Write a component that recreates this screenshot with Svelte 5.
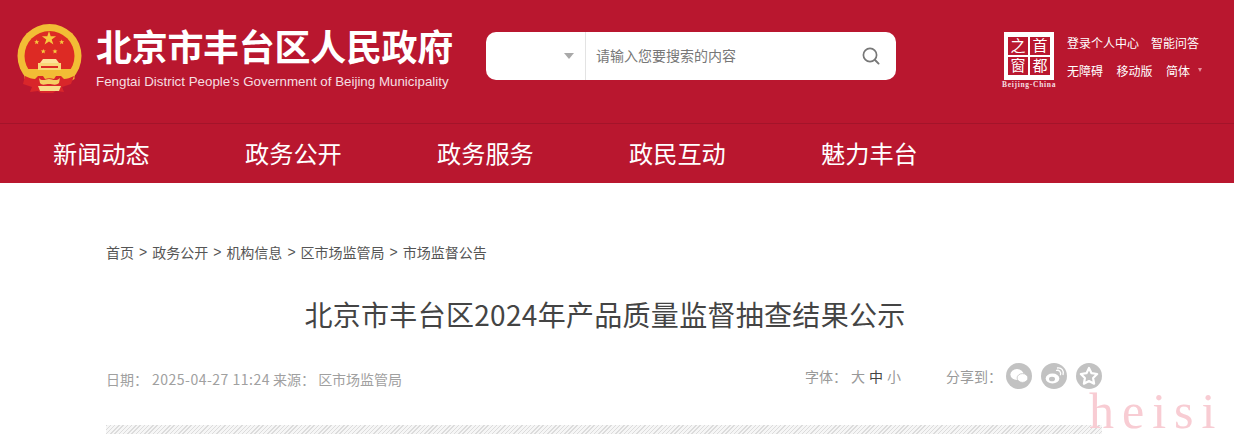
<script>
  const nav = ['新闻动态', '政务公开', '政务服务', '政民互动', '魅力丰台'];
  const crumbs = ['首页', '政务公开', '机构信息', '区市场监管局', '市场监督公告'];
  const smallStars = [[19.7, 19], [44.7, 19], [26.3, 28.3], [38, 28.3]];
</script>

<div class="page">
  <header class="top">
    <div class="brand">
      <svg class="emblem" viewBox="0 0 66 71" width="66" height="71" aria-hidden="true">
        <circle cx="32.5" cy="33" r="32" fill="#f2bd35" />
        <circle cx="32.5" cy="33" r="25" fill="#dd2a24" />
        <path d="M7.5 46h50v10c-8 5-17 7-25 7s-17-2-25-7z" fill="#f2bd35" />
        <path d="M32 8l1.7 5.2h5.4l-4.4 3.2 1.7 5.2-4.4-3.2-4.4 3.2 1.7-5.2-4.4-3.2h5.4z" fill="#f7c83f" />
        {#each smallStars as [x, y]}
          <path d="M{x} {y - 2.4}l.7 1.7h1.8l-1.4 1.1.5 1.8-1.6-1-1.6 1 .5-1.8-1.4-1.1h1.8z" fill="#f7c83f" />
        {/each}
        <path d="M26 36h13l3 4H23z" fill="#fde29a" />
        <path d="M21 40h23v7H21z" fill="#f9d678" />
        <path d="M24 43h17v2H24z" fill="#dd2a24" />
        <path d="M8 53c4 2 7 3 10 3l3-3h5l2 3c3-1 6-1 9 0l2-3h5l3 3c3 0 6-1 10-3l-3 8-9 3 2 5-8-1-3 2h-12l-3-2-8 1 2-5-9-3z" fill="#d9262a" />
        <path d="M22 55c3 4 7 1 10 1s7 3 11-1l-1 5c-3 3-7 1-10 1s-7 2-9-1z" fill="#f6cd62" />
        <path d="M21 63h23l-2 5H23z" fill="#f9dc8b" />
      </svg>
      <div class="names">
        <div class="cn">北京市丰台区人民政府</div>
        <div class="en">Fengtai District People's Government of Beijing Municipality</div>
      </div>
    </div>

    <div class="search">
      <div class="scope"><span class="caret"></span></div>
      <div class="field">请输入您要搜索的内容</div>
      <svg class="magnifier" viewBox="0 0 20 20" width="20" height="20" aria-hidden="true">
        <circle cx="9" cy="9" r="6.6" fill="none" stroke="#777" stroke-width="1.7" />
        <path d="M14 14l3.6 3.6" stroke="#777" stroke-width="1.9" stroke-linecap="round" />
      </svg>
    </div>

    <div class="seal">
      <svg viewBox="0 0 50 48" width="50" height="48" aria-hidden="true">
        <rect x="0" y="0" width="50" height="48" fill="#fff" />
        <rect x="4" y="5" width="20" height="18" fill="#b9172f" />
        <rect x="26" y="5" width="20" height="18" fill="#b9172f" />
        <rect x="4" y="25" width="20" height="18" fill="#b9172f" />
        <rect x="26" y="25" width="20" height="18" fill="#b9172f" />
        <text x="14" y="19" class="seal-glyph">之</text>
        <text x="36" y="19" class="seal-glyph">首</text>
        <text x="14" y="39" class="seal-glyph">窗</text>
        <text x="36" y="39" class="seal-glyph">都</text>
      </svg>
      <div class="seal-en">Beijing-China</div>
    </div>

    <div class="links">
      <div class="link-row first">
        <span>登录个人中心</span>
        <span>智能问答</span>
      </div>
      <div class="link-row">
        <span>无障碍</span>
        <span>移动版</span>
        <span>简体</span>
        <span class="mini-caret"></span>
      </div>
    </div>
  </header>

  <nav class="nav">
    {#each nav as item}
      <div class="nav-item">{item}</div>
    {/each}
  </nav>

  <main class="content">
    <div class="crumbs">
      {#each crumbs as c, i}
        {#if i > 0}<span class="sep">&gt;</span>{/if}
        <span>{c}</span>
      {/each}
    </div>

    <h1 class="title">北京市丰台区2024年产品质量监督抽查结果公示</h1>

    <div class="meta">
      <div class="meta-left">日期：<span class="stamp">2025-04-27 11:24</span> 来源：<span class="source">区市场监管局</span></div>
      <div class="meta-right">
        <div class="sizes">
          <span>字体：</span>
          <span>大</span>
          <span class="active">中</span>
          <span>小</span>
        </div>
        <div class="share">
          <span class="share-label">分享到：</span>
          <span class="round">
            <svg viewBox="0 0 26 26" width="26" height="26" aria-hidden="true">
              <ellipse cx="11" cy="11.5" rx="6.6" ry="5.4" fill="#fff" />
              <ellipse cx="16.5" cy="15" rx="5.4" ry="4.4" fill="#fff" stroke="#c2c2c2" stroke-width="0.8" />
            </svg>
          </span>
          <span class="round">
            <svg viewBox="0 0 26 26" width="26" height="26" aria-hidden="true">
              <ellipse cx="11.5" cy="15.5" rx="6.8" ry="5" fill="#fff" />
              <ellipse cx="11" cy="16" rx="3" ry="2.3" fill="#c2c2c2" />
              <path d="M15 7.5c3-1 5.5 1.5 4.4 4.8M16 5c4.6-1 7.4 3 6 7" fill="none" stroke="#fff" stroke-width="1.3" />
            </svg>
          </span>
          <span class="round">
            <svg viewBox="0 0 26 26" width="26" height="26" aria-hidden="true">
              <path d="M13 5l2.5 5.2 5.7.8-4.1 4 1 5.7-5.1-2.7-5.1 2.7 1-5.7-4.1-4 5.7-.8z" fill="none" stroke="#fff" stroke-width="2.2" stroke-linejoin="round" />
            </svg>
          </span>
        </div>
      </div>
    </div>

    <div class="rule"></div>
  </main>

  <div class="watermark">heisi</div>
</div>

<style>
  :global(body) {
    margin: 0;
    background: #fff;
  }

  .page {
    position: relative;
    width: 1234px;
    height: 442px;
    overflow: hidden;
    font-family: "Noto Sans CJK SC", "Liberation Sans", sans-serif;
  }

  .top {
    display: flex;
    align-items: flex-start;
    height: 123px;
    background: #b9172f;
    box-sizing: border-box;
  }

  .brand {
    display: flex;
    width: 486px;
    padding: 23px 0 0 17px;
    box-sizing: border-box;
    gap: 13px;
  }

  .emblem {
    flex: none;
  }

  .names {
    color: #fff;
    margin-top: -2px;
  }

  .cn {
    font-size: 36px;
    font-weight: 700;
    line-height: 48px;
    letter-spacing: -0.3px;
    white-space: nowrap;
  }

  .en {
    font-family: "Liberation Sans", sans-serif;
    font-size: 13.35px;
    line-height: 18px;
    margin-top: 4px;
    white-space: nowrap;
    color: #f6dfe2;
  }

  .search {
    flex: none;
    display: flex;
    align-items: center;
    width: 410px;
    height: 48px;
    margin-top: 32px;
    background: #fff;
    border-radius: 10px;
  }

  .scope {
    flex: none;
    display: flex;
    justify-content: flex-end;
    align-items: center;
    width: 100px;
    height: 100%;
    box-sizing: border-box;
    padding-right: 11px;
    border-right: 1px solid #e3e3e3;
  }

  .caret {
    width: 0;
    height: 0;
    border-left: 5.5px solid transparent;
    border-right: 5.5px solid transparent;
    border-top: 6px solid #a9a9a9;
  }

  .field {
    flex: 1;
    padding: 0 0 2px 10px;
    color: #777;
    font-size: 14px;
  }

  .magnifier {
    margin-right: 15px;
  }

  .seal {
    flex: none;
    margin: 32px 0 0 108px;
    width: 50px;
  }

  .seal svg {
    display: block;
  }

  .seal-glyph {
    fill: #fff;
    font-family: "Noto Sans CJK SC", sans-serif;
    font-size: 15px;
    text-anchor: middle;
  }

  .seal-en {
    font-family: "Liberation Serif", serif;
    font-size: 7.5px;
    font-weight: 700;
    line-height: 10px;
    letter-spacing: 0.7px;
    color: #f6dfe2;
    white-space: nowrap;
    margin-left: -2px;
  }

  .links {
    flex: none;
    margin: 28px 0 0 13px;
    color: #fff;
    font-size: 12px;
  }

  .link-row {
    display: flex;
    align-items: center;
    gap: 13.5px;
    height: 28px;
    white-space: nowrap;
  }

  .link-row.first {
    gap: 12px;
  }

  .mini-caret {
    width: 0;
    height: 0;
    margin-left: -6px;
    border-left: 2.5px solid transparent;
    border-right: 2.5px solid transparent;
    border-top: 4px solid #e8909c;
  }

  .nav {
    display: flex;
    height: 60px;
    padding-left: 53px;
    background: #b9172f;
    border-top: 1px solid #a3142a;
    box-sizing: border-box;
  }

  .nav-item {
    width: 192px;
    color: #fff;
    font-size: 24.2px;
    line-height: 57px;
    white-space: nowrap;
  }

  .content {
    width: 996px;
    margin-left: 106px;
  }

  .crumbs {
    display: flex;
    gap: 5px;
    padding-top: 59px;
    height: 20px;
    font-size: 14px;
    line-height: 20px;
    color: #555;
    white-space: nowrap;
  }

  .sep {
    font-family: "Liberation Sans", sans-serif;
  }

  .title {
    margin: 32px 0 0;
    width: 998px;
    text-align: center;
    font-size: 28px;
    font-weight: 400;
    letter-spacing: 0.3px;
    line-height: 40px;
    color: #444;
    white-space: nowrap;
  }

  .meta {
    display: flex;
    justify-content: space-between;
    align-items: center;
    height: 30px;
    margin-top: 27px;
    font-size: 14px;
    color: #a0a0a0;
  }

  .stamp {
    margin-left: 4px;
    letter-spacing: 0.5px;
  }

  .source {
    margin-left: 3px;
  }

  .meta-left {
    white-space: pre;
    padding-top: 6px;
  }

  .meta-right {
    display: flex;
    align-items: center;
    gap: 45px;
  }

  .sizes {
    display: flex;
    gap: 4px;
    color: #999;
  }

  .active {
    color: #444;
  }

  .share {
    display: flex;
    align-items: center;
  }

  .share-label {
    margin-right: 4px;
    color: #999;
  }

  .round {
    display: block;
    width: 26px;
    height: 26px;
    border-radius: 50%;
    background: #c2c2c2;
    margin-right: 9px;
  }

  .round:last-child {
    margin-right: 0;
  }

  .round svg {
    display: block;
  }

  .rule {
    height: 9px;
    margin-top: 34px;
    background: repeating-linear-gradient(135deg, #dcdcdc 0 1px, #f6f6f6 1px 3px);
  }

  .watermark {
    position: absolute;
    left: 1089px;
    top: 379px;
    font-family: "Liberation Serif", serif;
    font-size: 50px;
    line-height: 64px;
    letter-spacing: 8px;
    color: #f8ccd3;
    white-space: nowrap;
  }
</style>
